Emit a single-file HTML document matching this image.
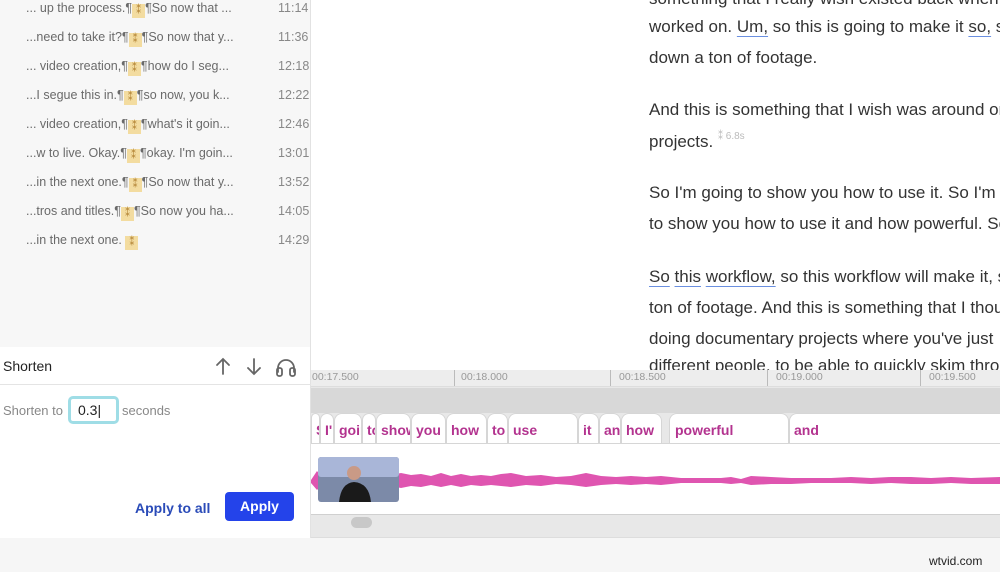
<!DOCTYPE html>
<html><head><meta charset="utf-8"><style>
*{margin:0;padding:0;box-sizing:border-box}
body{width:1000px;height:572px;overflow:hidden;background:#fff;font-family:"Liberation Sans",sans-serif;position:relative}
.side{position:absolute;left:0;top:0;width:311px;height:347px;background:#f7f7f7;border-right:1px solid #e2e2e2}
.row{position:absolute;left:26px;font-size:12.5px;color:#6a6a6a;white-space:nowrap;line-height:16px}
.row .t{position:absolute;left:252px;color:#888}
.ic{display:inline-block;width:13px;height:14px;background:#f3dca0;vertical-align:-1px;color:#b08030;font-size:10px;text-align:center;line-height:14px}
.panel{position:absolute;left:0;top:347px;width:311px;height:191px;background:#fff;border-right:1px solid #e2e2e2}
.main{position:absolute;left:649px;font-size:17px;color:#333;white-space:nowrap}
.u{text-decoration:underline;text-decoration-color:#6a8fe0;text-underline-offset:4px}
.tile{position:absolute;top:413px;height:30px;background:#fff;border:1px solid #d6d6d6;border-bottom:none;border-radius:8px 8px 0 0;color:#b3338f;font-weight:bold;font-size:14px;padding:8px 0 0 4px;overflow:hidden;white-space:nowrap}
.rl{position:absolute;top:371px;font-size:10.5px;color:#999}
.tk{position:absolute;top:370px;width:1px;height:16px;background:#bbb}
</style></head><body>
<div class="side">
<div class="row" style="top:0">... up the process.¶<span class="ic">⁑</span>¶So now that ...<span class="t">11:14</span></div>
<div class="row" style="top:29px">...need to take it?¶<span class="ic">⁑</span>¶So now that y...<span class="t">11:36</span></div>
<div class="row" style="top:58px">... video creation,¶<span class="ic">⁑</span>¶how do I seg...<span class="t">12:18</span></div>
<div class="row" style="top:87px">...I segue this in.¶<span class="ic">⁑</span>¶so now, you k...<span class="t">12:22</span></div>
<div class="row" style="top:116px">... video creation,¶<span class="ic">⁑</span>¶what's it goin...<span class="t">12:46</span></div>
<div class="row" style="top:145px">...w to live. Okay.¶<span class="ic">⁑</span>¶okay. I'm goin...<span class="t">13:01</span></div>
<div class="row" style="top:174px">...in the next one.¶<span class="ic">⁑</span>¶So now that y...<span class="t">13:52</span></div>
<div class="row" style="top:203px">...tros and titles.¶<span class="ic">⁑</span>¶So now you ha...<span class="t">14:05</span></div>
<div class="row" style="top:232px">...in the next one. <span class="ic">⁑</span><span class="t">14:29</span></div>
</div>
<div class="panel">
<div style="position:absolute;left:3px;top:11px;font-size:14px;color:#222">Shorten</div>
<svg style="position:absolute;left:212px;top:9px" width="90" height="22" fill="none" stroke="#666" stroke-width="1.8" stroke-linecap="round"><path d="M11 3v15M5 9l6-6 6 6"/><path d="M42 3v15M36 12l6 6 6-6"/><path d="M66 16v-4a8 8 0 0 1 16 0v4"/><rect x="65" y="12" width="5" height="8" rx="2"/><rect x="78" y="12" width="5" height="8" rx="2"/></svg>
<div style="position:absolute;left:0;top:37px;width:311px;height:1px;background:#e4e4e4"></div>
<div style="position:absolute;left:3px;top:56px;font-size:13px;color:#888">Shorten to</div>
<div style="position:absolute;left:68px;top:49px;width:51px;height:28px;border:3px solid #9fdde6;border-radius:5px;font-size:14px;color:#222;padding:3px 0 0 7px">0.3|</div>
<div style="position:absolute;left:122px;top:56px;font-size:13px;color:#888">seconds</div>
<div style="position:absolute;left:135px;top:153px;font-size:14px;font-weight:bold;color:#2a4bb8">Apply to all</div>
<div style="position:absolute;left:225px;top:145px;width:69px;height:29px;background:#2443ea;border-radius:4px;color:#fff;font-size:14px;font-weight:bold;text-align:center;line-height:29px">Apply</div>
</div>
<div class="main" style="top:-11px">something that I really wish existed back when I</div>
<div class="main" style="top:17px">worked on. <span class="u">Um,</span> so this is going to make it <span class="u">so,</span> so</div>
<div class="main" style="top:48px">down a ton of footage.</div>
<div class="main" style="top:100px">And this is something that I wish was around on</div>
<div class="main" style="top:131px">projects. <span style="color:#bbb;font-size:10px;vertical-align:8px">⁑ 6.8s</span></div>
<div class="main" style="top:183px">So I'm going to show you how to use it. So I'm going</div>
<div class="main" style="top:214px">to show you how to use it and how powerful. So</div>
<div class="main" style="top:267px"><span class="u">So</span> <span class="u">this</span> <span class="u">workflow,</span> so this workflow will make it, so</div>
<div class="main" style="top:298px">ton of footage. And this is something that I thought</div>
<div class="main" style="top:329px">doing documentary projects where you've just</div>
<div class="main" style="top:356px">different people, to be able to quickly skim through</div>
<div style="position:absolute;left:311px;top:370px;width:689px;height:168px;background:#e8e8e8"></div>
<div style="position:absolute;left:311px;top:370px;width:689px;height:17px;background:#ededed;border-bottom:1px solid #ddd"></div>
<div class="rl" style="left:312px">00:17.500</div>
<div class="tk" style="left:454px"></div><div class="rl" style="left:461px">00:18.000</div>
<div class="tk" style="left:610px"></div><div class="rl" style="left:619px">00:18.500</div>
<div class="tk" style="left:767px"></div><div class="rl" style="left:776px">00:19.000</div>
<div class="tk" style="left:920px"></div><div class="rl" style="left:929px">00:19.500</div>
<div style="position:absolute;left:311px;top:388px;width:689px;height:25px;background:#d8d8d8"></div>
<div class="tile" style="left:311px;width:9px">S</div>
<div class="tile" style="left:320px;width:14px">I'</div>
<div class="tile" style="left:334px;width:28px">goin</div>
<div class="tile" style="left:362px;width:14px">to</div>
<div class="tile" style="left:376px;width:35px">show</div>
<div class="tile" style="left:411px;width:35px">you</div>
<div class="tile" style="left:446px;width:41px">how</div>
<div class="tile" style="left:487px;width:21px">to</div>
<div class="tile" style="left:508px;width:70px">use</div>
<div class="tile" style="left:578px;width:21px">it</div>
<div class="tile" style="left:599px;width:22px">and</div>
<div class="tile" style="left:621px;width:41px">how</div>
<div class="tile" style="left:669px;width:120px;padding-left:5px">powerful</div>
<div class="tile" style="left:789px;width:220px">and</div>
<div style="position:absolute;left:311px;top:443px;width:689px;height:72px;background:#fff;border-top:1px solid #d6d6d6;border-bottom:1px solid #d0d0d0"></div>
<svg style="position:absolute;left:311px;top:443px" width="689" height="72">
<path fill="#df55b0" d="M0 37 L6 28 L10 33 L14 26 L20 31 L30 28 L40 31 L50 29 L60 31 L70 28 L80 32 L90 30 L100 32 L110 31 L120 33 L130 30 L140 33 L150 31 L160 33 L170 32 L180 33 L190 31 L200 30 L215 33 L230 32 L245 34 L260 33 L275 30 L290 33 L305 34 L320 33 L335 34 L350 33 L370 35 L390 35 L410 35 L420 34 L430 36 L440 33 L460 34 L480 35 L500 35 L520 35 L540 34 L560 35 L580 34 L600 34 L620 35 L640 34 L660 35 L689 34 L689 41 L660 41 L640 40 L620 41 L600 41 L580 40 L560 41 L540 40 L520 40 L500 40 L480 41 L460 41 L440 42 L430 40 L420 41 L410 40 L390 40 L370 40 L350 42 L335 41 L320 42 L305 41 L290 42 L275 44 L260 42 L245 41 L230 43 L215 42 L200 44 L190 43 L180 42 L170 43 L160 42 L150 44 L140 42 L130 44 L120 42 L110 44 L100 43 L90 45 L80 43 L70 46 L60 44 L50 46 L40 44 L30 47 L20 44 L14 49 L10 43 L6 47 L0 40Z"/>
<rect x="7" y="14" width="81" height="45" rx="3" fill="#7c8aa8"/>
<rect x="7" y="14" width="81" height="20" rx="3" fill="#a9b6d8"/>
<circle cx="43" cy="30" r="7" fill="#c99a86"/>
<path d="M28 59 Q30 40 43 39 Q58 40 60 59Z" fill="#1a1a1a"/>
</svg>
<div style="position:absolute;left:351px;top:517px;width:21px;height:11px;border-radius:6px;background:#c8c8c8"></div>
<div style="position:absolute;left:311px;top:537px;width:689px;height:1px;background:#ddd"></div>
<div style="position:absolute;left:0;top:538px;width:1000px;height:34px;background:#f6f6f6"></div>
<div style="position:absolute;left:929px;top:554px;font-size:12px;color:#222">wtvid.com</div>
</body></html>
